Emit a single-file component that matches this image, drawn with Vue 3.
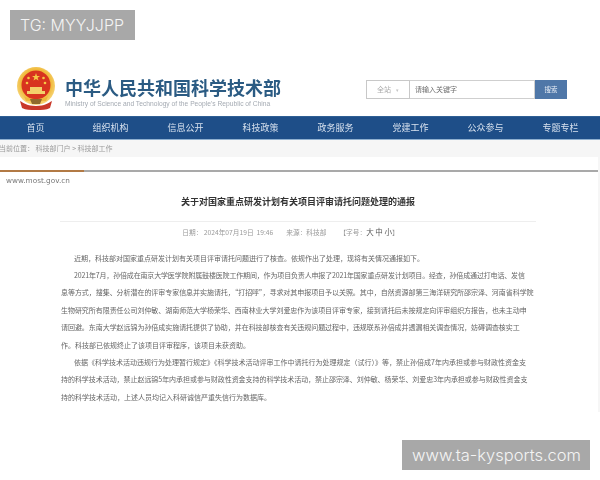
<script setup>
const nav = ['首页', '组织机构', '信息公开', '科技政策', '政务服务', '党建工作', '公众参与', '专题专栏']
const lines = [
  { t: '近期，科技部对国家重点研发计划有关项目评审请托问题进行了核查。依规作出了处理，现将有关情况通报如下。', c: 'ind' },
  { t: '2021年7月，孙倍成在南京大学医学院附属鼓楼医院工作期间，作为项目负责人申报了2021年国家重点研发计划项目。经查，孙倍成通过打电话、发信', c: 'ind tight' },
  { t: '息等方式，搜集、分析潜在的评审专家信息并实施请托，“打招呼”，寻求对其申报项目予以关照。其中，自然资源部第三海洋研究所邵宗泽、河南省科学院', c: 'snug' },
  { t: '生物研究所有限责任公司刘仲敏、湖南师范大学杨荣华、西南林业大学刘爱忠作为该项目评审专家，接到请托后未按规定向评审组织方报告，也未主动申', c: 'snug' },
  { t: '请回避。东南大学赵远锦为孙倍成实施请托提供了协助，并在科技部核查有关违规问题过程中，违规联系孙倍成并透漏相关调查情况，妨碍调查核实工', c: 'snug' },
  { t: '作。科技部已依规终止了该项目评审程序，该项目未获资助。', c: '' },
  { t: '依据《科学技术活动违规行为处理暂行规定》《科学技术活动评审工作中请托行为处理规定（试行）》等，禁止孙倍成7年内承担或参与财政性资金支', c: 'ind' },
  { t: '持的科学技术活动，禁止赵远锦5年内承担或参与财政性资金支持的科学技术活动，禁止邵宗泽、刘仲敏、杨荣华、刘爱忠3年内承担或参与财政性资金支', c: 'snug' },
  { t: '持的科学技术活动，上述人员均记入科研诚信严重失信行为数据库。', c: '' },
]
</script>

<template>
  <div class="page">
    <div class="shot">
      <header class="head">
        <svg class="emblem" viewBox="0 0 40 44" width="40" height="44">
          <defs>
            <radialGradient id="rim" cx="50%" cy="45%" r="55%">
              <stop offset="70%" stop-color="#f0b93a" />
              <stop offset="100%" stop-color="#f7d77c" />
            </radialGradient>
          </defs>
          <circle cx="20" cy="19" r="19" fill="url(#rim)" />
          <circle cx="20" cy="18" r="14.5" fill="#d8331f" />
          <polygon points="20,6 21,9 24,9 21.6,10.8 22.5,13.6 20,12 17.5,13.6 18.4,10.8 16,9 19,9" fill="#f6c845" />
          <circle cx="12.5" cy="11" r="1.3" fill="#f6c845" />
          <circle cx="27.5" cy="11" r="1.3" fill="#f6c845" />
          <circle cx="11" cy="16" r="1.3" fill="#f6c845" />
          <circle cx="29" cy="16" r="1.3" fill="#f6c845" />
          <path d="M11 24h18v3H11zM14 20h12v4H14z" fill="#f4cf6a" />
          <path d="M8 29c4 4 20 4 24 0l-2 5H10z" fill="#eeb63c" />
          <path d="M4 34c4 2 7 5 16 5s12-3 16-5l-2 7c-4 2-8 2-14 2s-10 0-14-2z" fill="#c9392a" />
          <path d="M14 32h12l-2 5h-8z" fill="#8f6a2c" />
        </svg>
        <div class="brand">
          <div class="cn">中华人民共和国科学技术部</div>
          <div class="en">Ministry of Science and Technology of the People's Republic of China</div>
        </div>
        <div class="search">
          <div class="scope"><span>全站</span><i>▾</i></div>
          <div class="input">请输入关键字</div>
          <div class="btn">搜索</div>
        </div>
      </header>
      <nav class="nav">
        <div class="nav-row">
          <a v-for="n in nav" :key="n">{{ n }}</a>
        </div>
      </nav>
      <div class="crumb">当前位置： 科技部门户 &gt; 科技部工作</div>
      <section class="rail">
        <article class="card">
          <div class="rule"><b></b></div>
          <div class="site">www.most.gov.cn</div>
          <h1>关于对国家重点研发计划有关项目评审请托问题处理的通报</h1>
          <div class="meta">
            <span>日期： 2024年07月19日 &nbsp;19:46</span>
            <span>来源：科技部</span>
            <span>【字号：<em>大 中 小</em>】</span>
          </div>
          <div class="body">
            <p v-for="(l, k) in lines" :key="k" :class="l.c">{{ l.t }}</p>
          </div>
        </article>
      </section>
    </div>
    <div class="mark mark-top">TG: MYYJJPP</div>
    <div class="mark mark-bottom">www.ta-kysports.com</div>
  </div>
</template>

<style scoped>
.page { position: relative; width: 600px; height: 480px; overflow: hidden; background: #fff; font-family: "Noto Sans CJK SC", sans-serif; }
.shot { filter: blur(0.45px); }
.head { height: 116px; box-sizing: border-box; padding: 67px 33px 0 16px; display: flex; align-items: flex-start; background: #fff; }
.emblem { flex: none; }
.brand { margin: 8px 0 0 9px; width: 216px; }
.cn { font-size: 18px; line-height: 24px; font-weight: 700; color: #2b5b83; white-space: nowrap; }
.en { font-family: "Liberation Sans", sans-serif; font-size: 6.7px; line-height: 9px; color: #a4aab2; white-space: nowrap; }
.search { margin: 13px 0 0 auto; width: 201px; height: 19px; display: flex; font-size: 7px; line-height: 17px; box-sizing: border-box; }
.scope { width: 44px; border: 1px solid #c8c8c8; box-sizing: border-box; color: #a9a9a9; display: flex; justify-content: center; gap: 5px; font-size: 7px; }
.scope i { font-style: normal; font-size: 5px; color: #c4c4c4; }
.input { flex: 1; border: 1px solid #cfcfcf; border-left: 0; box-sizing: border-box; padding-left: 5px; color: #6e6e6e; }
.btn { width: 32px; background: #4f77a8; color: #e8eef6; text-align: center; line-height: 19px; font-size: 6.5px; }
.nav { height: 24px; background: #1e4e88; border-top: 1px solid #2f5f94; border-bottom: 1px solid #8fb0d0; box-sizing: border-box; }
.nav-row { display: flex; margin-left: -2px; }
.nav a { flex: none; width: 75px; text-align: center; font-size: 9px; line-height: 22px; color: #d7e1ee; }
.crumb { height: 17px; background: #f6f6f6; font-size: 7px; line-height: 16px; color: #9a9a9a; white-space: nowrap; margin-left: -1px; }
.rail { height: 255px; background: #f6f6f6; padding-right: 2px; }
.card { height: 100%; background: #fff; padding-top: 13px; box-sizing: border-box; }
.rule { height: 2px; background: #a9a9a9; }
.rule b { display: block; width: 84px; height: 2px; background: #b27a45; }
.site { font-family: "DejaVu Sans", sans-serif; font-size: 7.3px; line-height: 9px; color: #777; margin: 4px 0 0 6px; }
h1 { margin: 10px 0 0; font-size: 9px; line-height: 14px; font-weight: 700; color: #333; text-align: center; padding-right: 2px; }
.meta { margin: 12px 62px 0 60px; border-top: 1px solid #eee; padding: 5px 15px 0 0; display: flex; justify-content: center; gap: 13px; font-size: 6.7px; line-height: 10px; color: #9a9a9a; }
.meta em { font-style: normal; font-size: 7.5px; color: #555; }
.body { margin: 12.5px 0 0 61px; }
p { margin: 0; font-size: 7px; line-height: 17.4px; color: #666; white-space: nowrap; }
.ind { padding-left: 13px; }
.tight { letter-spacing: -0.16px; }
.snug { letter-spacing: -0.05px; }
.mark { position: absolute; background: #a8a8a8; color: #f4f4f4; font-family: Inter, "Liberation Sans", sans-serif; display: flex; align-items: center; height: 30px; box-sizing: border-box; }
.mark-top { left: 10px; top: 10px; width: 125px; padding-left: 10px; font-size: 16px; font-weight: 300; }
.mark-bottom { left: 402px; top: 440px; width: 188px; padding-left: 10px; font-size: 16.5px; font-weight: 300; }
</style>
